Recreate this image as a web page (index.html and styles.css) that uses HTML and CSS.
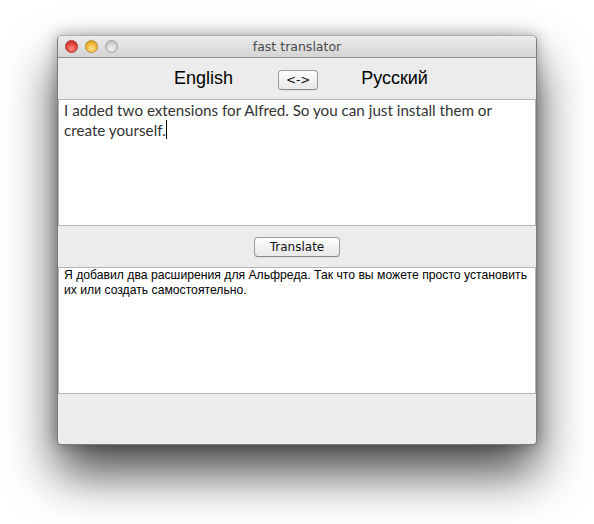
FILE: index.html
```html
<!DOCTYPE html>
<html>
<head>
<meta charset="utf-8">
<link rel="stylesheet" href="styles.css">
</head>
<body>
<div class="window">
  <div class="titlebar">
    <div class="lights">
      <span class="light red"></span>
      <span class="light yellow"></span>
      <span class="light grey"></span>
    </div>
    <div class="title">fast translator</div>
  </div>
  <div class="toolbar">
    <span class="lang">English</span>
    <button class="btn swap">&lt;-&gt;</button>
    <span class="lang">Русский</span>
  </div>
  <div class="textview source">I added two extensions for Alfred. So you can just install them or<br>create yourself.<span class="caret"></span></div>
  <div class="midbar">
    <button class="btn translate">Translate</button>
  </div>
  <div class="textview target">Я добавил два расширения для Альфреда. Так что вы можете просто установить<br>их или создать самостоятельно.</div>
  <div class="bottombar"></div>
</div>
</body>
</html>
```

FILE: styles.css
```css
html, body {
  margin: 0;
  padding: 0;
  background: #ffffff;
}
body {
  padding: 35px 0 0 57px;
  height: 524px;
  box-sizing: border-box;
  overflow: hidden;
}
.window {
  width: 480px;
  height: 410px;
  box-sizing: border-box;
  border: 1px solid #7c7c7c;
  border-top-color: #b0b0b0;
  border-radius: 5px 5px 4px 4px;
  background: #ececec;
  box-shadow: 0 28px 50px rgba(0,0,0,0.72), 0 0 14px rgba(0,0,0,0.3);
  display: flex;
  flex-direction: column;
  overflow: hidden;
}
.titlebar {
  height: 21px;
  flex: none;
  background: linear-gradient(#ececec, #d4d4d4);
  border-bottom: 1px solid #8f8f8f;
  display: flex;
  align-items: center;
  position: relative;
}
.lights {
  display: flex;
  gap: 7px;
  padding-left: 7px;
}
.light {
  width: 13px;
  height: 13px;
  border-radius: 50%;
  box-sizing: border-box;
}
.red {
  background: radial-gradient(circle at 50% 70%, #ff8a80 0%, #e0443c 55%, #b3231d 100%);
  border: 1px solid #a8332c;
}
.yellow {
  background: radial-gradient(circle at 50% 70%, #ffe48a 0%, #f0b53a 55%, #c98a12 100%);
  border: 1px solid #b98a2a;
}
.grey {
  background: radial-gradient(circle at 50% 70%, #f4f4f4 0%, #d2d2d2 55%, #b0b0b0 100%);
  border: 1px solid #a0a0a0;
}
.title {
  position: absolute;
  left: 0;
  right: 0;
  top: 3px;
  text-align: center;
  font-family: "DejaVu Sans", sans-serif;
  font-size: 12.5px;
  color: #4a4a4a;
}
.toolbar {
  height: 41px;
  flex: none;
  display: flex;
  align-items: center;
  justify-content: center;
  gap: 45px;
  padding-left: 8px;
}
.toolbar .lang:last-child {
  margin-left: -2px;
}
.lang {
  font-family: "Liberation Sans", Arial, sans-serif;
  font-size: 18px;
  color: #000;
}
.btn {
  font-family: "DejaVu Sans", sans-serif;
  font-size: 12px;
  color: #111;
  background: linear-gradient(#ffffff, #f1f1f1 50%, #e9e9e9);
  border: 1px solid #9a9a9a;
  border-bottom-color: #8a8a8a;
  border-radius: 4px;
  padding: 0;
  box-shadow: 0 1px 0 rgba(0,0,0,0.05);
}
.swap {
  width: 40px;
  height: 20px;
  margin-top: 3px;
}
.translate {
  width: 86px;
  height: 20px;
}
.textview {
  height: 127px;
  flex: none;
  box-sizing: border-box;
  background: #ffffff;
  border: 1px solid #b4b4b4;
  margin: 0;
  white-space: nowrap;
  overflow: hidden;
}
.source {
  font-family: Lato, "Open Sans", sans-serif;
  font-size: 15.2px;
  line-height: 20px;
  color: #333;
  padding: 0 0 0 5px;
}
.caret {
  display: inline-block;
  width: 0;
  height: 19px;
  border-left: 1px solid #000;
  vertical-align: top;
}
.midbar {
  height: 41px;
  flex: none;
  display: flex;
  align-items: center;
  justify-content: center;
}
.target {
  font-family: "Liberation Sans", Arial, sans-serif;
  font-size: 12.2px;
  line-height: 15px;
  color: #000;
  padding: 0 0 0 5px;
}
.bottombar {
  flex: 1;
}
```
